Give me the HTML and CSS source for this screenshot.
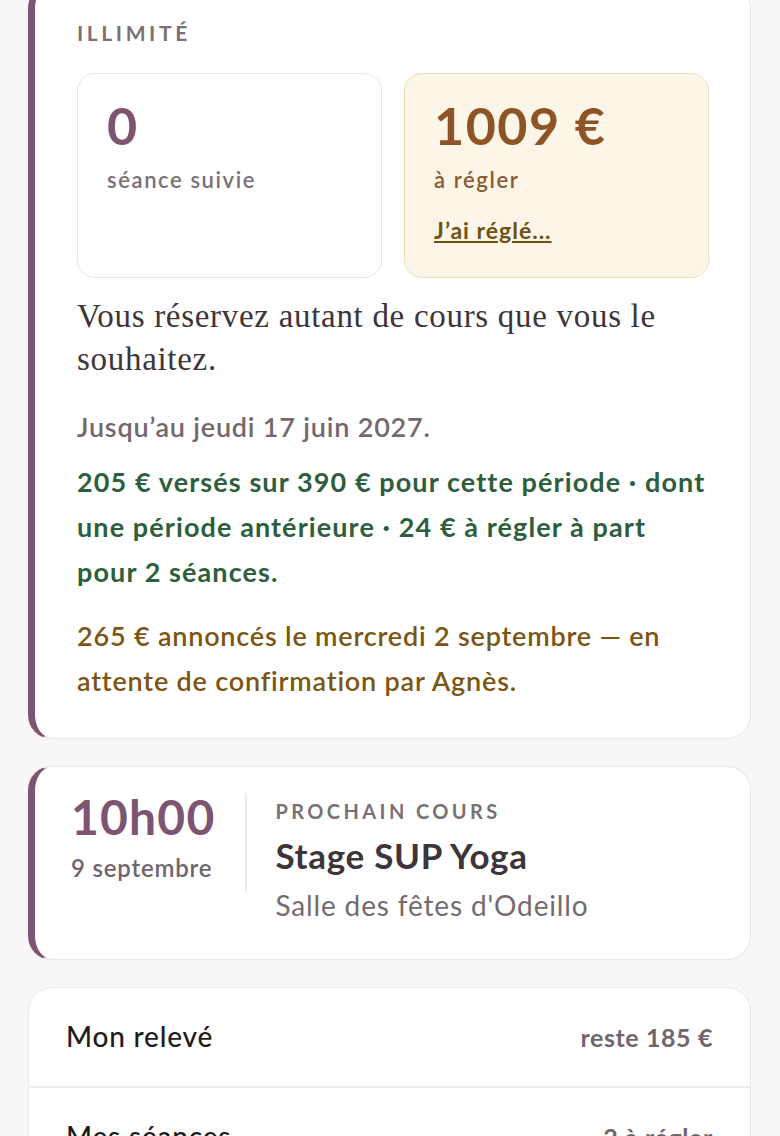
FILE: index.html
```html
<!DOCTYPE html>
<html lang="fr">
<head>
<meta charset="utf-8">
<title>Mon abonnement</title>
<link rel="stylesheet" href="styles.css">
</head>
<body>
<main class="page">
  <section class="card card--accent card--plan">
    <div class="eyebrow">ILLIMITÉ</div>
    <div class="stats">
      <div class="stat">
        <div class="stat__value">0</div>
        <div class="stat__label">séance suivie</div>
      </div>
      <div class="stat stat--due">
        <div class="stat__value">1009 €</div>
        <div class="stat__label">à régler</div>
        <a class="stat__link" href="#">J’ai réglé...</a>
      </div>
    </div>
    <p class="plan__desc">Vous réservez autant de cours que vous le souhaitez.</p>
    <p class="plan__until">Jusqu’au jeudi 17 juin 2027.</p>
    <p class="plan__paid">205 € versés sur 390 € pour cette période · dont<br>une période antérieure · 24 € à régler à part<br>pour 2 séances.</p>
    <p class="plan__pending">265 € annoncés le mercredi 2 septembre — en<br>attente de confirmation par Agnès.</p>
  </section>

  <section class="card card--accent next">
    <div class="next__when">
      <div class="next__time">10h00</div>
      <div class="next__date">9 septembre</div>
    </div>
    <div class="next__info">
      <div class="eyebrow eyebrow--small">PROCHAIN COURS</div>
      <div class="next__title">Stage SUP Yoga</div>
      <div class="next__place">Salle des fêtes d'Odeillo</div>
    </div>
  </section>

  <section class="card menu">
    <a class="menu__row" href="#">
      <span class="menu__label">Mon relevé</span>
      <span class="menu__meta">reste 185 €</span>
    </a>
    <a class="menu__row" href="#">
      <span class="menu__label">Mes séances</span>
      <span class="menu__meta">2 à régler</span>
    </a>
  </section>
</main>
</body>
</html>
```

FILE: styles.css
```css
* {
  box-sizing: border-box;
}

html, body {
  margin: 0;
  padding: 0;
  background: #f8f6f7;
}

body {
  font-family: Lato, "Noto Sans", "DejaVu Sans", sans-serif;
  color: #3a3336;
  overflow: hidden;
}

.page {
  padding: 0 29px 0 28px;
  display: flex;
  flex-direction: column;
  gap: 27px;
}

.card {
  background: #ffffff;
  border: 1px solid #ebe7e9;
  border-radius: 24px;
}

.card--accent {
  border-left: 7px solid #7d5571;
}

.card--plan {
  margin-top: -16px;
  padding: 35px 41px 35px 42px;
}

.eyebrow {
  font-size: 21px;
  line-height: 1.2;
  font-weight: 700;
  letter-spacing: 3.6px;
  color: #7a7075;
}

.eyebrow--small {
  font-size: 20px;
  letter-spacing: 3.4px;
}

.stats {
  margin-top: 28px;
  display: grid;
  grid-template-columns: 1fr 1fr;
  gap: 22px;
}

.stat {
  border: 1px solid #e9e5e7;
  border-radius: 18px;
  padding: 25px 28px 31px 29px;
  background: #ffffff;
}

.stat--due {
  background: #fdf6e8;
  border-color: #efdfb6;
}

.stat__value {
  font-size: 52px;
  line-height: 1;
  font-weight: 700;
  letter-spacing: 1.5px;
  color: #7d5571;
}

.stat--due .stat__value {
  color: #8d5526;
}

.stat__label {
  margin-top: 14px;
  font-size: 22px;
  line-height: 1.35;
  font-weight: 600;
  letter-spacing: 1.6px;
  color: #7a7075;
}

.stat--due .stat__label {
  color: #8a5a30;
}

.stat__link {
  display: block;
  margin-top: 20px;
  font-size: 23px;
  line-height: 1.35;
  font-weight: 700;
  letter-spacing: 1px;
  color: #6e5310;
  text-decoration: underline;
  text-decoration-thickness: 2px;
  text-underline-offset: 2px;
}

.plan__desc {
  margin: 17px 0 0;
  font-family: "Liberation Serif", "DejaVu Serif", serif;
  font-size: 33px;
  line-height: 43px;
  letter-spacing: 0.7px;
  color: #3d3539;
}

.plan__until {
  margin: 26px 0 0;
  font-size: 27px;
  line-height: 1.5;
  font-weight: 600;
  letter-spacing: 0.8px;
  color: #73686e;
}

.plan__paid {
  margin: 12px 0 0;
  font-size: 27px;
  line-height: 45px;
  font-weight: 700;
  letter-spacing: 1.1px;
  white-space: nowrap;
  color: #2d5e3e;
}

.plan__pending {
  margin: 19px 0 0;
  font-size: 27px;
  line-height: 45px;
  font-weight: 600;
  letter-spacing: 0.8px;
  white-space: nowrap;
  color: #7b5613;
}

.next {
  display: flex;
  align-items: flex-start;
  padding: 26px 30px 35px 36px;
}

.next__when {
  padding-right: 30px;
  padding-bottom: 7px;
  border-right: 2px solid #efeaec;
}

.next__time {
  font-size: 48px;
  line-height: 1;
  font-weight: 700;
  letter-spacing: 1.2px;
  color: #7d5571;
}

.next__date {
  margin-top: 10px;
  font-size: 24px;
  line-height: 1.4;
  font-weight: 600;
  letter-spacing: 0.8px;
  color: #6f666b;
}

.next__info {
  padding-left: 28px;
  padding-top: 6px;
}

.next__title {
  margin-top: 11px;
  font-size: 35px;
  line-height: 1.2;
  font-weight: 700;
  letter-spacing: 0.7px;
  color: #3d3539;
}

.next__place {
  margin-top: 11px;
  font-size: 28px;
  line-height: 1.3;
  letter-spacing: 0.85px;
  color: #746a70;
}

.menu {
  border-bottom-left-radius: 0;
  border-bottom-right-radius: 0;
}

.menu__row {
  display: flex;
  justify-content: space-between;
  align-items: baseline;
  padding: 30px 37px 32px 37px;
  text-decoration: none;
}

.menu__row + .menu__row {
  border-top: 2px solid #eeeaec;
}

.menu__label {
  font-size: 28px;
  line-height: 1.3;
  font-weight: 500;
  letter-spacing: 0.8px;
  color: #1f1b1d;
}

.menu__meta {
  font-size: 25px;
  line-height: 1.3;
  font-weight: 700;
  letter-spacing: 0.6px;
  color: #6f666b;
}
```
